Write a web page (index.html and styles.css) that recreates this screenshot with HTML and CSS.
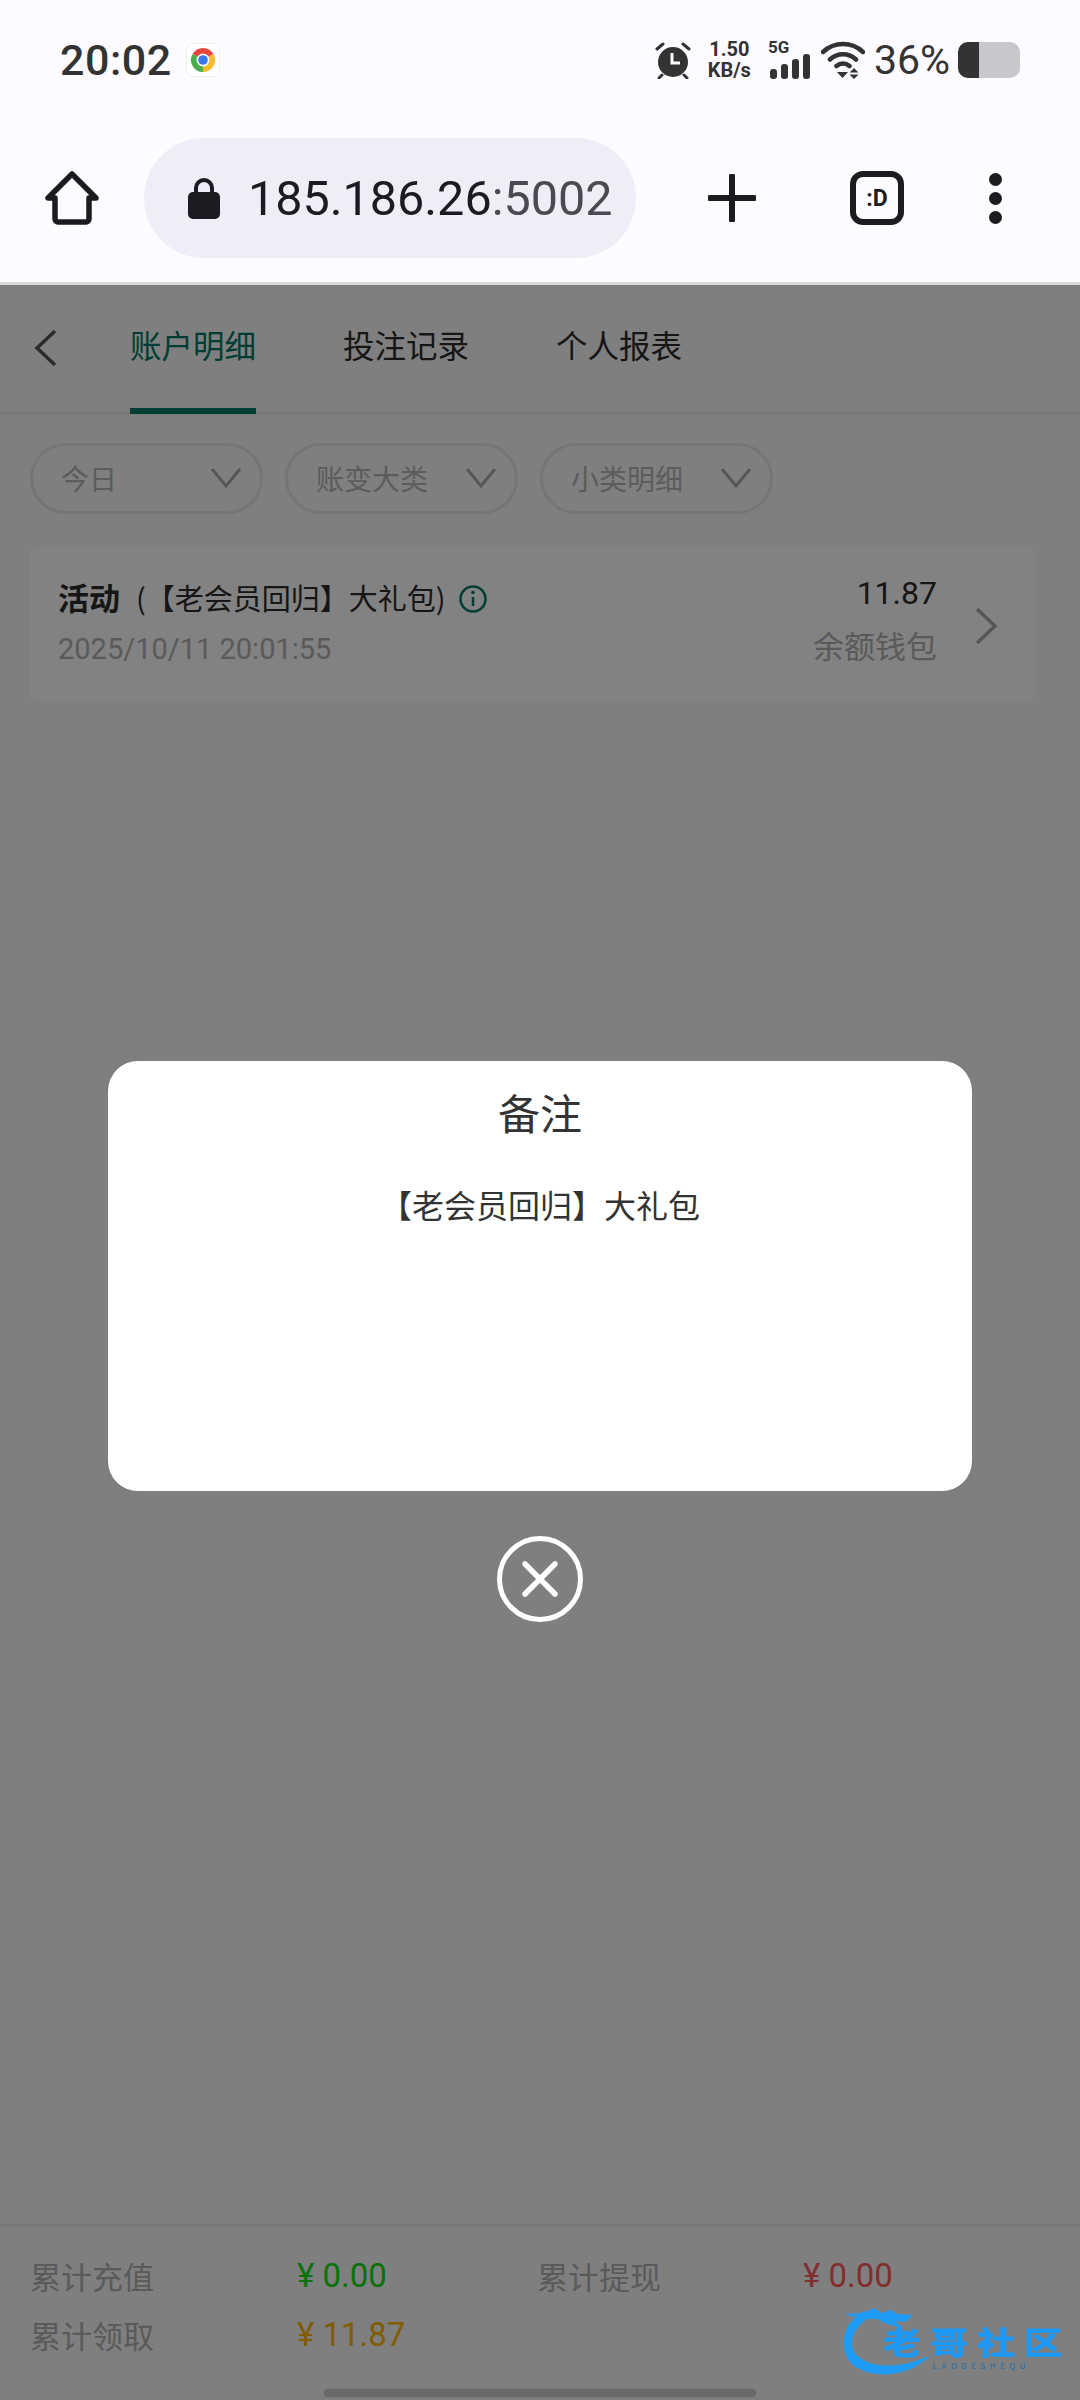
FILE: index.html
```html
<!DOCTYPE html>
<html lang="zh-CN">
<head>
    <meta charset="UTF-8">
    <meta name="viewport" content="width=device-width, initial-scale=1.0">
    <title>账户明细</title>
    <link rel="stylesheet" href="styles.css">
</head>
<body>
    <!-- Status bar -->
    <div class="status-bar">
        <span class="clock">20:02</span>
        <svg class="chrome-tile" width="34" height="34" viewBox="0 0 34 34">
            <rect x="0.5" y="0.5" width="33" height="33" rx="7" fill="#fff" stroke="#eee"/>
            <path d="M17 17L6.600 11A12 12 0 0 1 27.400 11z" fill="#e8453c"/>
            <path d="M17 17L27.400 11A12 12 0 0 1 17 29z" fill="#f9bb2d"/>
            <path d="M17 17L17 29A12 12 0 0 1 6.600 11z" fill="#4aae48"/>
            <circle cx="17" cy="17" r="6.500" fill="#fff"/>
            <circle cx="17" cy="17" r="4.800" fill="#3b78e7"/>
        </svg>
        <div class="status-right">
            <svg width="38" height="38" viewBox="0 0 38 38">
                <circle cx="19" cy="21" r="15" fill="#333"/>
                <path d="M18 12v10h8" fill="none" stroke="#fdfbff" stroke-width="3"/>
                <path d="M3 8l6-5M35 8l-6-5M8 34l-3 3M30 34l3 3" stroke="#333" stroke-width="3" stroke-linecap="round"/>
            </svg>
            <div class="net-speed"><span>1.50</span><span>KB/s</span></div>
            <div class="net-signal">
                <span class="net-type">5G</span>
                <svg width="42" height="26" viewBox="0 0 42 26">
                    <rect x="2" y="16" width="7" height="10" rx="3" fill="#333"/>
                    <rect x="13" y="11" width="7" height="15" rx="3" fill="#333"/>
                    <rect x="24" y="6" width="7" height="20" rx="3" fill="#333"/>
                    <rect x="35" y="1" width="7" height="25" rx="3" fill="#333"/>
                </svg>
            </div>
            <svg width="44" height="38" viewBox="0 0 44 38">
                <path d="M2 11a29 29 0 0 1 40 0M9 18.500a19 19 0 0 1 26 0M15.500 25a10 10 0 0 1 13 0" fill="none" stroke="#333" stroke-width="4.500" stroke-linecap="round"/>
                <path d="M16 31h11l-5.500 6zM33 27l4.500 4.500h-9zM33 38l-4.500-4.500h9z" fill="#333"/>
            </svg>
            <span class="battery-pct">36%</span>
            <div class="battery"><div class="battery-level"></div></div>
        </div>
    </div>

    <!-- Browser toolbar -->
    <div class="toolbar">
        <svg class="home-icon" width="54" height="54" viewBox="0 0 54 54">
            <path d="M27 3L3 27h7v21a3 3 0 0 0 3 3h28a3 3 0 0 0 3-3V27h7z" fill="none" stroke="#1b1b22" stroke-width="5.500" stroke-linejoin="round"/>
        </svg>
        <div class="url-pill">
            <svg width="32" height="42" viewBox="0 0 32 42">
                <path d="M8 18V11a8 8 0 0 1 16 0v7" fill="none" stroke="#1b1b22" stroke-width="4"/>
                <rect x="0" y="15" width="32" height="27" rx="5" fill="#1b1b22"/>
            </svg>
            <span class="url-text">185.186.26<span class="url-port">:5002</span></span>
        </div>
        <svg class="plus-icon" width="48" height="48" viewBox="0 0 48 48">
            <path d="M24 2v44M2 24h44" stroke="#1b1b22" stroke-width="6" stroke-linecap="round"/>
        </svg>
        <div class="tab-switch">:D</div>
        <div class="menu-dots"><i></i><i></i><i></i></div>
    </div>

    <!-- Page -->
    <div class="page">
        <div class="tabs">
            <svg class="back-icon" width="24" height="38" viewBox="0 0 24 38">
                <path d="M21 2L3 19l18 17" fill="none" stroke="#555" stroke-width="3.500"/>
            </svg>
            <div class="tab active">账户明细</div>
            <div class="tab">投注记录</div>
            <div class="tab">个人报表</div>
        </div>

        <div class="filters">
            <div class="filter"><span>今日</span><svg width="32" height="22" viewBox="0 0 32 22"><path d="M2 2l14 17L30 2" fill="none" stroke="#aaa" stroke-width="3"/></svg></div>
            <div class="filter"><span>账变大类</span><svg width="32" height="22" viewBox="0 0 32 22"><path d="M2 2l14 17L30 2" fill="none" stroke="#aaa" stroke-width="3"/></svg></div>
            <div class="filter"><span>小类明细</span><svg width="32" height="22" viewBox="0 0 32 22"><path d="M2 2l14 17L30 2" fill="none" stroke="#aaa" stroke-width="3"/></svg></div>
        </div>

        <div class="record">
            <div class="record-main">
                <div class="record-title">
                    <b>活动</b>
                    <span>(【老会员回归】大礼包)</span>
                    <svg width="30" height="30" viewBox="0 0 30 30">
                        <circle cx="15" cy="15" r="12.500" fill="none" stroke="#007a66" stroke-width="2.500"/>
                        <path d="M15 13v9" stroke="#007a66" stroke-width="2.500"/>
                        <circle cx="15" cy="8.500" r="1.800" fill="#007a66"/>
                    </svg>
                </div>
                <div class="record-date">2025/10/11 20:01:55</div>
            </div>
            <div class="record-side">
                <div class="record-amount">11.87</div>
                <div class="record-wallet">余额钱包</div>
            </div>
            <svg class="record-arrow" width="24" height="38" viewBox="0 0 24 38">
                <path d="M3 2l18 17L3 36" fill="none" stroke="#aaa" stroke-width="3.500"/>
            </svg>
        </div>

        <div class="summary">
            <span class="sum-label">累计充值</span><span class="sum-value green">¥ 0.00</span>
            <span class="sum-label">累计提现</span><span class="sum-value red">¥ 0.00</span>
            <span class="sum-label">累计领取</span><span class="sum-value orange">¥ 11.87</span>
        </div>
        <div class="home-bar"></div>

        <!-- Dialog over the page -->
        <div class="overlay">
            <div class="dialog">
                <div class="dialog-title">备注</div>
                <div class="dialog-text">【老会员回归】大礼包</div>
            </div>
            <svg class="dialog-close" width="86" height="86" viewBox="0 0 86 86">
                <circle cx="43" cy="43" r="40.500" fill="none" stroke="#fff" stroke-width="5"/>
                <path d="M28 28l30 30M58 28L28 58" stroke="#fff" stroke-width="5.500" stroke-linecap="round"/>
            </svg>
        </div>
    </div>

    <!-- Forum watermark -->
    <div class="watermark">
        <svg class="wm-dragon" width="92" height="68" viewBox="0 0 92 68">
            <path d="M2 6c10 2 20-1 30-5l6 5 10-3 6 4 16 1-8 7-10-1 8 7-16-4-10-5-10 0C16 18 6 28 10 42c5 14 34 26 78 6-24 24-60 24-78 10C-3 47-3 22 14 9 9 10 5 9 2 6z" fill="#1e9bf5"/>
        </svg>
        <div class="wm-name">老哥社区</div>
        <div class="wm-sub">LAOGESHEQU</div>
    </div>
</body>
</html>
```

FILE: styles.css
```css
* {
    box-sizing: border-box;
}
body {
    margin: 0;
    width: 1080px;
    height: 2400px;
    display: flex;
    flex-direction: column;
    position: relative;
    overflow: hidden;
    background-color: #fdfbff;
    font-family: Roboto, "Noto Sans CJK SC", sans-serif;
    color: #222;
    text-spacing-trim: space-all;
}

/* status bar */
.status-bar {
    height: 120px;
    display: flex;
    align-items: center;
    padding: 0 60px;
    color: #333;
}
.clock {
    font-size: 43px;
    font-weight: 500;
    letter-spacing: 0.5px;
}
.chrome-tile {
    margin-left: 14px;
}
.status-right {
    margin-left: auto;
    display: flex;
    align-items: center;
    gap: 16px;
}
.net-speed {
    display: flex;
    flex-direction: column;
    align-items: center;
    font-size: 20px;
    font-weight: 700;
    line-height: 21px;
}
.net-signal {
    width: 42px;
    display: flex;
    flex-direction: column;
    margin-left: 1px;
    margin-right: -5px;
}
.net-type {
    height: 12px;
    font-size: 17px;
    font-weight: 700;
    line-height: 12px;
}
.battery-pct {
    font-size: 41px;
    margin-left: -7px;
}
.battery {
    width: 62px;
    height: 36px;
    margin-left: -8px;
    border-radius: 10px;
    background-color: #c9c7cb;
    overflow: hidden;
}
.battery-level {
    width: 21px;
    height: 100%;
    background-color: #333;
}

/* browser toolbar */
.toolbar {
    height: 165px;
    display: flex;
    align-items: center;
    padding: 0 0 6px 45px;
    border-bottom: 3px solid #d9d9d9;
}
.url-pill {
    width: 492px;
    height: 120px;
    margin-left: 45px;
    padding-left: 44px;
    display: flex;
    align-items: center;
    gap: 28px;
    border-radius: 60px;
    background-color: #eeeef8;
}
.url-text {
    font-size: 48.500px;
    color: #1b1b22;
}
.url-port {
    color: #4a4a55;
}
.plus-icon {
    margin-left: 72px;
}
.tab-switch {
    width: 54px;
    height: 54px;
    margin-left: 94px;
    display: flex;
    align-items: center;
    justify-content: center;
    border: 6px solid #1b1b22;
    border-radius: 13px;
    font-size: 23px;
    font-weight: 700;
    color: #1b1b22;
}
.menu-dots {
    margin-left: 85px;
    display: flex;
    flex-direction: column;
    gap: 6px;
}
.menu-dots i {
    display: block;
    width: 13px;
    height: 13px;
    border-radius: 50%;
    background-color: #1b1b22;
}

/* page under the dialog */
.page {
    flex: 1;
    position: relative;
    display: flex;
    flex-direction: column;
    background-color: #f9f9f9;
    font-family: "Noto Sans CJK SC", Roboto, sans-serif;
}
.tabs {
    height: 130px;
    display: flex;
    align-items: stretch;
    gap: 87px;
    padding-left: 130px;
    position: relative;
    border-bottom: 3px solid #eaeaea;
}
.back-icon {
    position: absolute;
    left: 34px;
    top: 44px;
}
.tab {
    display: flex;
    align-items: center;
    padding-bottom: 6px;
    font-size: 31.500px;
    color: #2b2b2b;
    border-bottom: 6px solid transparent;
    margin-bottom: -2px;
}
.tab.active {
    color: #007a66;
    border-bottom-color: #007a66;
}
.filters {
    display: flex;
    gap: 22px;
    padding: 28px 30px 0;
}
.filter {
    width: 233px;
    height: 71px;
    padding: 0 18px 2px 28px;
    display: flex;
    align-items: center;
    justify-content: space-between;
    border: 3px solid #e6e6e6;
    border-radius: 36px;
    font-size: 28px;
    color: #b4b4b4;
}
.record {
    width: 1005px;
    height: 156px;
    margin: 32px 0 0 30px;
    padding: 0 37px 0 28px;
    display: flex;
    align-items: center;
    border-radius: 8px;
    background-color: #fff;
}
.record-main {
    flex: 1;
    display: flex;
    flex-direction: column;
    gap: 13px;
    padding-bottom: 8px;
}
.record-title {
    display: flex;
    align-items: center;
    font-size: 29px;
    color: #2b2b2b;
}
.record-title b {
    margin-right: 16px;
    font-size: 31px;
}
.record-title svg {
    margin-left: 12px;
    margin-top: 4px;
}
.record-date {
    font-family: Roboto, sans-serif;
    font-size: 29px;
    color: #b0b0b0;
}
.record-side {
    text-align: right;
    display: flex;
    flex-direction: column;
    gap: 13px;
    padding-bottom: 9px;
}
.record-amount {
    font-family: Roboto, sans-serif;
    font-size: 32px;
    color: #2b2b2b;
}
.record-wallet {
    font-size: 31px;
    line-height: 40px;
    color: #b0b0b0;
}
.record-arrow {
    margin-left: 37px;
    margin-top: 4px;
}
.summary {
    margin-top: auto;
    padding: 26px 0 19px 30px;
    display: grid;
    grid-template-columns: 267px 240px 266px 1fr;
    row-gap: 14px;
    align-items: center;
    border-top: 3px solid #eaeaea;
}
.sum-label {
    font-size: 31px;
    line-height: 45px;
    color: #b0b0b0;
}
.sum-value {
    font-family: Roboto, sans-serif;
    font-size: 33px;
}
.green {
    color: #12e012;
}
.red {
    color: #ff5a5a;
}
.orange {
    color: #ffb400;
}
.home-bar {
    width: 434px;
    height: 10px;
    margin: 12px auto 2px;
    border-radius: 5px;
    border: 1px solid #e8e8e8;
    background-color: #cfcfcf;
}
.overlay {
    position: absolute;
    inset: 0;
    padding-bottom: 3px;
    display: flex;
    flex-direction: column;
    align-items: center;
    justify-content: center;
    background-color: rgba(0, 0, 0, 0.49);
}
.dialog {
    width: 864px;
    height: 430px;
    padding-top: 21px;
    border-radius: 30px;
    background-color: #fff;
    text-align: center;
    color: #333;
}
.dialog-title {
    font-size: 42px;
    line-height: 60px;
}
.dialog-text {
    margin-top: 39px;
    font-size: 32px;
    line-height: 46px;
}
.dialog-close {
    margin-top: 45px;
}

/* watermark */
.watermark {
    position: absolute;
    left: 843px;
    top: 2305px;
    width: 230px;
    height: 72px;
    font-family: "Noto Sans CJK SC", sans-serif;
    filter: blur(0.7px);
}
.wm-dragon {
    position: absolute;
    left: 0;
    top: 2px;
}
.wm-name {
    position: absolute;
    left: 40px;
    top: 21px;
    height: 30px;
    font-size: 38px;
    line-height: 30px;
    font-weight: 700;
    letter-spacing: 9px;
    white-space: nowrap;
    transform: scaleY(0.8);
    color: #1e98f5;
    -webkit-text-stroke: 1px #1e98f5;
}
.wm-sub {
    position: absolute;
    left: 90px;
    top: 56px;
    font-size: 8px;
    line-height: 9px;
    letter-spacing: 4.500px;
    color: #1a6cb0;
}
```
